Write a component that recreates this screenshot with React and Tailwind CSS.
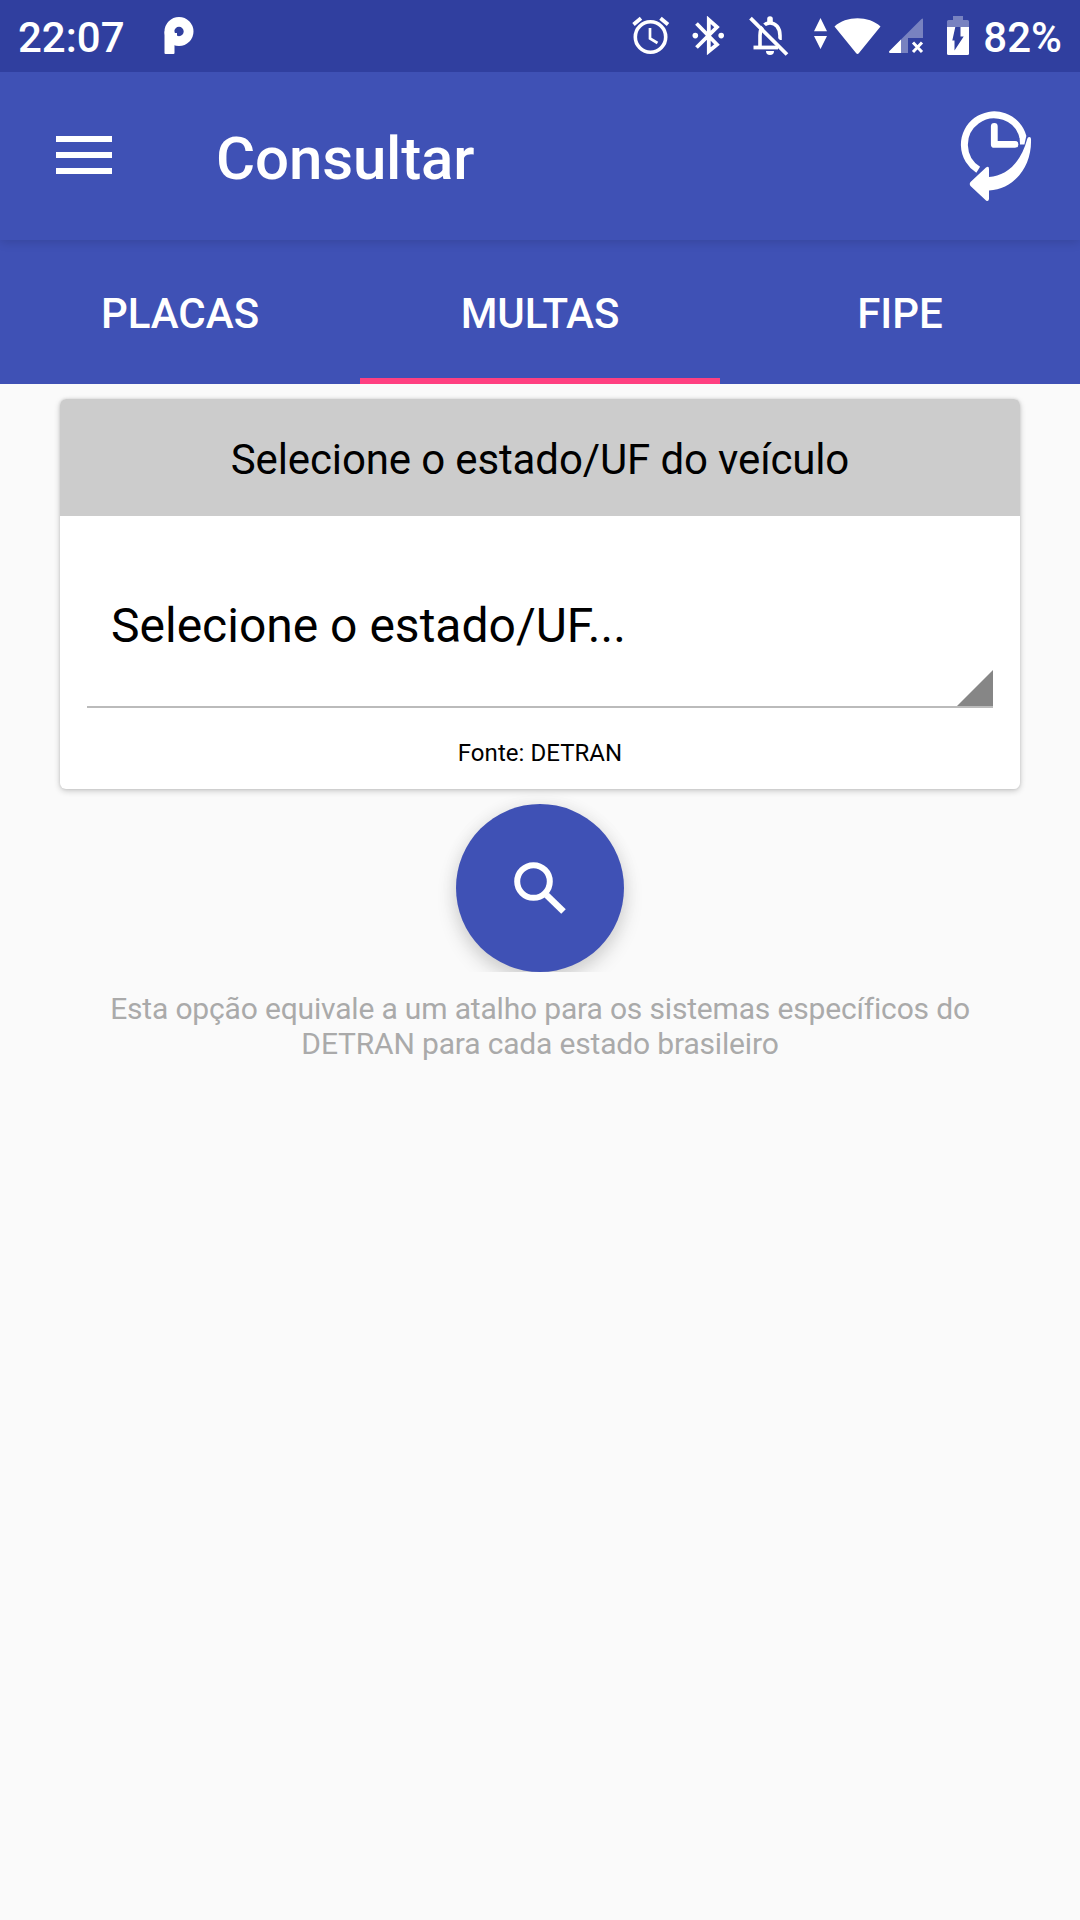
import { useState } from "react";

const TABS = ["PLACAS", "MULTAS", "FIPE"];

// Notification icon of the music app
function AppNotification() {
  return (
    <svg className="ml-[39px] w-[30px] h-[38px]" viewBox="164 18 30 38" fill="none">
      <circle cx="179" cy="32.5" r="9.6" stroke="#fff" strokeWidth="9.8" />
      <rect x="164.5" y="32" width="10" height="23" rx="1" fill="#fff" />
      <rect x="172" y="34" width="5" height="3" fill="#fff" />
    </svg>
  );
}

function AlarmIcon() {
  return (
    <svg className="w-[38px] h-[40px]" viewBox="632 17 38 40" fill="none" stroke="#fff">
      <circle cx="650.5" cy="38" r="15.2" strokeWidth="3.6" />
      <path d="M650 29v10.5l7.5 4.5" strokeWidth="2.7" />
      <path d="M633.5 25.5l7.5-6.3M668 25.5l-7.5-6.3" strokeWidth="3.8" />
    </svg>
  );
}

function BluetoothIcon() {
  return (
    <svg className="ml-[22px] w-[32px] h-[40px]" viewBox="692 17 32 40" fill="none">
      <path
        d="M696.5 24.5L717 45.5L708.8 52.3V20.8L717 28L696.5 48.5"
        stroke="#fff"
        strokeWidth="3.8"
      />
      <circle cx="695.3" cy="36.6" r="2.8" fill="#fff" />
      <circle cx="721.2" cy="36.6" r="2.8" fill="#fff" />
    </svg>
  );
}

function BellOffIcon() {
  return (
    <svg className="ml-[24px] w-[42px] h-[41px]" viewBox="748 17 42 41" fill="none">
      <path
        d="M760 49V36.5C760 28.5 764.5 24 770 24C775.5 24 780 28.5 780 36.5V41"
        stroke="#fff"
        strokeWidth="3.6"
      />
      <path d="M753.5 48.5H778" stroke="#fff" strokeWidth="3.8" />
      <path d="M767.2 24V20a2.8 2.8 0 0 1 5.6 0V24z" fill="#fff" />
      <path d="M766 52h8a4 4 0 0 1-8 0z" fill="#fff" />
      <path d="M753.5 17L791 54" stroke="#303f9f" strokeWidth="3" />
      <path d="M750.5 19.2L787 55.5" stroke="#fff" strokeWidth="3.8" />
    </svg>
  );
}

function WifiIcon() {
  return (
    <svg className="ml-[23px] w-[69px] h-[38px]" viewBox="813 16 69 38" fill="#fff">
      <path d="M820.5 17L827 30.3H814zM814 35h13l-6.5 13z" />
      <path d="M834.5 25.5C846 14.5 869 14.5 880.5 25.5L859 52Q857.5 54 856 52z" />
    </svg>
  );
}

function SignalIcon() {
  return (
    <svg className="ml-[7px] w-[35px] h-[36px]" viewBox="889 19 35 36">
      <path d="M923 19.5V39H908V54H890Q888.5 53 890 51.5L921.5 20z" fill="#fff" fillOpacity=".35" />
      <path d="M901 40.5V54H890Q888 53 890 51.5z" fill="#fff" />
      <path d="M913 43.5l9 9.5M922 43.5l-9 9.5" stroke="#fff" strokeWidth="3" />
    </svg>
  );
}

function BatteryIcon() {
  return (
    <svg className="ml-[23px] w-[22px] h-[40px]" viewBox="947 16 22 40">
      <path
        d="M953 16h10v4h4.5q1.5 0 1.5 1.5V27H947V21.5q0-1.5 1.5-1.5H953z"
        fill="#fff"
        fillOpacity=".35"
      />
      <path d="M947 27h22v26.5q0 1.5-1.5 1.5h-19q-1.5 0-1.5-1.5z" fill="#fff" />
      <path d="M960.5 27V36.5H963.7L954.5 50.5V40.5H952.3L955.3 27z" fill="#303f9f" />
    </svg>
  );
}

function StatusBar() {
  return (
    <div className="relative z-10 flex h-[72px] items-center bg-[#303f9f] pl-[18px] pr-[18px] text-[42px] font-medium leading-none">
      <span className="pt-[3px]">22:07</span>
      <AppNotification />
      <div className="ml-auto flex items-center">
        <AlarmIcon />
        <BluetoothIcon />
        <BellOffIcon />
        <WifiIcon />
        <SignalIcon />
        <BatteryIcon />
        <span className="ml-[14px] pt-[3px]">82%</span>
      </div>
    </div>
  );
}

function HistoryIcon() {
  return (
    <svg className="w-[72px] h-[92px]" viewBox="960 110 72 92" fill="none">
      <path
        d="M978.2 169.8A29.8 29.8 0 1 1 1023 137"
        stroke="#fff"
        strokeWidth="7"
      />
      <path d="M1020 144.5h4.4l1.9-8.5-6.800 0z" fill="#fff" />
      <path
        d="M994.3 126.5V144.4H1015"
        stroke="#fff"
        strokeWidth="6.8"
        strokeLinecap="round"
        strokeLinejoin="round"
      />
      <path
        d="M970.5 182L986 167.5Q989 165.500 989 169V177C1006 176 1021 163 1027.200 139Q1027.600 137 1029.300 137Q1031 137 1031 139C1032 167 1014 189 989 190.500V199Q988.500 202 986 200.500L970.500 186Q969 184 970.500 182z"
        fill="#fff"
      />
    </svg>
  );
}

export default function App() {
  const [activeTab, setActiveTab] = useState("MULTAS");

  return (
    <div className="flex min-h-[1920px] w-[1080px] flex-col bg-[#fafafa] font-[Roboto,sans-serif] text-white">
      <StatusBar />

      {/* App bar */}
      <header className="relative flex h-[168px] items-center bg-[#3f51b5] pl-14 pr-12 shadow-[0_2px_10px_rgba(0,0,0,0.14)]">
        <button aria-label="Menu" className="mb-[2px] flex w-14 flex-col gap-[10px]">
          <span className="h-[6px] bg-white"></span>
          <span className="h-[6px] bg-white"></span>
          <span className="h-[6px] bg-white"></span>
        </button>
        <h1 className="ml-[104px] pt-[5px] text-[60px] font-medium leading-none tracking-[-0.15px]">
          Consultar
        </h1>
        <button aria-label="Histórico" className="ml-auto">
          <HistoryIcon />
        </button>
      </header>

      {/* Tabs */}
      <nav className="grid h-36 grid-cols-3 bg-[#3f51b5]">
        {TABS.map((tab) => (
          <button
            key={tab}
            onClick={() => setActiveTab(tab)}
            className={`border-b-[6px] pt-[9px] text-[42px] font-medium leading-none ${
              activeTab === tab ? "border-[#ff4081]" : "border-transparent"
            }`}
          >
            {tab}
          </button>
        ))}
      </nav>

      <main className="flex flex-col items-center text-black">
        {/* State selector */}
        <section className="mt-[15px] h-[390px] w-[960px] overflow-hidden rounded-[6px] bg-white text-center shadow-[0_2px_6px_rgba(0,0,0,0.2),0_0_3px_rgba(0,0,0,0.12)]">
          <h2 className="h-[117px] bg-[#cccccc] pt-1 text-[42px] leading-[113px] tracking-[-0.13px]">
            Selecione o estado/UF do veículo
          </h2>
          <button className="mx-[27px] flex h-48 w-[906px] items-end justify-between border-b-2 border-[#bbbbbb] pl-6">
            <span className="mb-[52px] text-5xl leading-[56px]">
              Selecione o estado/UF...
            </span>
            <svg className="h-9 w-9" viewBox="0 0 36 36" fill="#868686">
              <path d="M36 0v36H0z" />
            </svg>
          </button>
          <p className="mt-[31px] text-2xl leading-[28px] tracking-[0.05px]">
            Fonte: DETRAN
          </p>
        </section>

        {/* The shadow of the button is cut off at its lower edge */}
        <div className="flex h-[183px] w-full justify-center overflow-hidden pt-[15px]">
          <button
            aria-label="Pesquisar"
            className="flex size-[168px] items-center justify-center rounded-full bg-[#3f51b5] shadow-[0_9px_20px_rgba(0,0,0,0.16),0_0_18px_rgba(0,0,0,0.06)]"
          >
            <svg className="h-[52px] w-[52px]" viewBox="514 862 52 52" fill="none" stroke="#fff">
              <circle cx="533.5" cy="881.5" r="16.3" strokeWidth="6" />
              <path d="M546.5 895L563.5 911.5" strokeWidth="6.5" />
            </svg>
          </button>
        </div>

        <p className="mt-[19px] w-[900px] text-center text-[30px] leading-[35px] tracking-[-0.17px] text-[#aaaaaa]">
          Esta opção equivale a um atalho para os sistemas específicos do
          DETRAN para cada estado brasileiro
        </p>
      </main>
    </div>
  );
}
